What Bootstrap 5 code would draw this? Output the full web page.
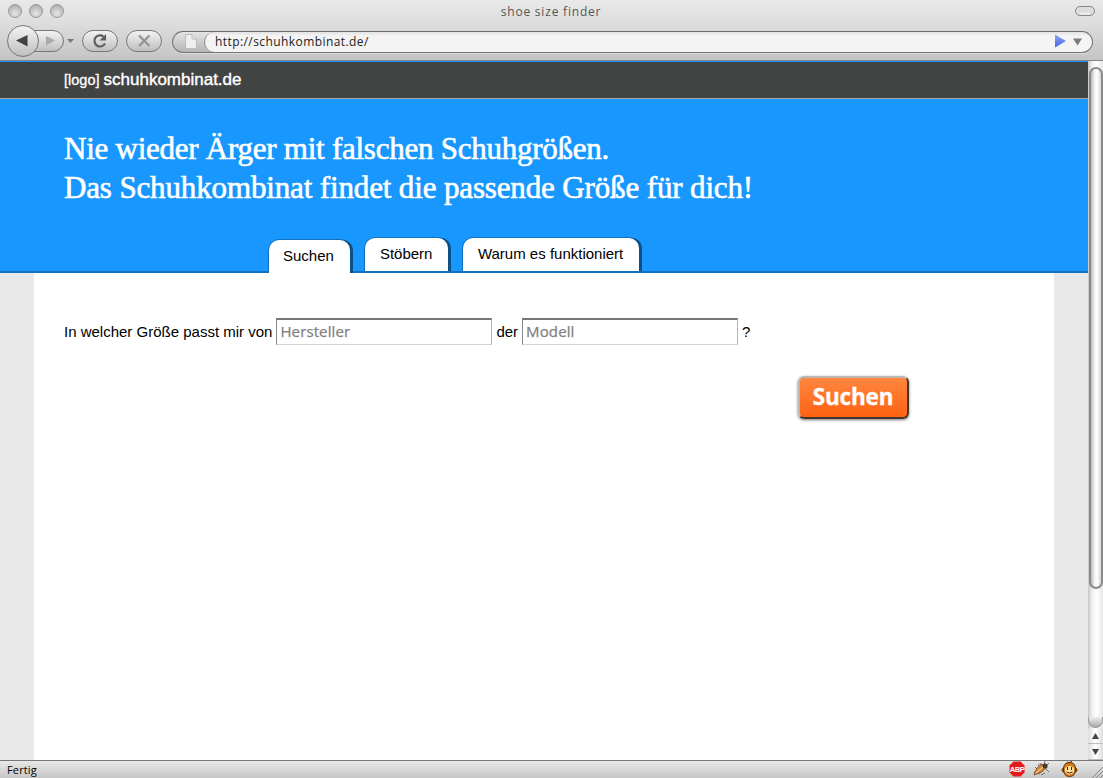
<!DOCTYPE html>
<html lang="de">
<head>
<meta charset="utf-8">
<title>shoe size finder</title>
<meta name="viewport" content="width=device-width, initial-scale=1">
<link href="https://cdn.jsdelivr.net/npm/bootstrap@5.3.0/dist/css/bootstrap.min.css" rel="stylesheet">
<style>
body{font-family:"Liberation Sans",Arial,sans-serif;font-size:15px;line-height:18px;color:#000;background:#fff}
.lucida{font-family:"Open Sans","Noto Sans",sans-serif}
.window{height:778px}
.chrome{height:61px;background:linear-gradient(#e9e9e9 0,#dedede 22px,#c5c5c5 59px);border-bottom:1px solid #858585}
.titlebar{height:24px;padding:3px 8px 0 7px}
.titlebar .caption{font-size:12px;line-height:17px;letter-spacing:.8px;color:#555;padding-right:40px}
.toolbar{height:36px;padding:0 10px 0 7px}
.urlbar{height:22px;margin-left:10px;border:1px solid #777;border-top-color:#6b6b6b;border-radius:11px;background:linear-gradient(#e4e4e4,#b5b5b5);overflow:hidden;box-shadow:0 1px 0 #dcdcdc}
.urlbox{background:linear-gradient(#e2e2e2,#f4f4f4 4px);border-radius:11px;font-size:12px;letter-spacing:.42px;color:#222;border-left:1px solid #888;padding-left:10px;padding-right:10px}
.page-view{height:699px}
.site-bar{height:38px;background:#424443;border-top:1px solid #1897fe;border-bottom:1px solid #a5a7a8;padding-left:64px;color:#fff;font-size:14.5px;line-height:35px}
.site-bar b{font-size:17px;font-weight:400;-webkit-text-stroke:.4px #fff}
.site-bar span{-webkit-text-stroke:.3px #fff}
.hero{height:174px;background:#1897fe;border-bottom:2px solid #1270bd;padding-left:64px}
.hero h1{font-family:"Liberation Serif",serif;font-size:31px;line-height:39px;font-weight:400;color:#fff;margin:0;padding-top:30px;-webkit-text-stroke:.6px #fff}
.h-one{letter-spacing:-.25px}
.h-two{letter-spacing:-.14px}
.tabs{margin-left:205px;gap:15px;height:33px}
.tab{background:#fff;color:#000;border:0;border-radius:10px 10px 0 0;height:33px;padding:7px 15.5px 0 15px;box-shadow:2px 0 0 #0d5085,3px 0 0 #0d5085,0 -1px 0 #1270bd,-1px 0 0 #1270bd;text-decoration:none;white-space:nowrap}
.tab.active{padding:7px 16px 0 14px;margin-top:2px;position:relative}
.paper{margin:0 34px;background:#fff;padding:45px 145px 0 30px}
.fieldbox{width:216px;height:27px;border:1px solid #b5b5b5;border-top:2px solid #777;border-left-color:#888;border-bottom-color:#d5d5d5;border-radius:0;padding:0 3px 2px;font-size:15px;font-family:"Open Sans",sans-serif;letter-spacing:.12px;background:#fff}
.fieldbox::placeholder{color:#808080;opacity:1;-webkit-text-stroke:.25px #808080}
.go{width:111px;height:43px;border:2px solid;border-color:#bdb7b3 #43372f #43372f #bdb7b3;border-radius:6px;background:linear-gradient(#ff8842,#ff6010) border-box;color:#fff;font:700 22.5px/34px "Open Sans",sans-serif;letter-spacing:-.15px;padding:0 1px 1px 0;-webkit-text-stroke:.3px #fff;box-shadow:0 1px 3px rgba(0,0,0,.55)}
.scroll{width:15px;background:linear-gradient(90deg,#c6c6c6,#f0f0f0 4px,#fff 9px,#e6e6e6)}
.thumb{height:522px;margin:6px 0 0 1px;width:14px;border:2px solid #8a8a8a;border-radius:8px;background:linear-gradient(90deg,#bbb,#f8f8f8 4px,#fff 6px,#d6d6d6)}
.track-end{height:11px;border-radius:0 0 8px 8px;background:linear-gradient(#eee,#aaa);border:1px solid #999;border-top:0}
.arrow{height:16px;border-bottom:1px solid #bbb;background:linear-gradient(90deg,#ddd,#fff,#ddd)}
.status{height:18px;border-top:1px solid #777;background:linear-gradient(#e8e8e8,#c6c6c6);padding-left:7px;font-size:11px;line-height:17px;letter-spacing:.15px}
</style>
</head>
<body class="overflow-hidden">
<div class="window d-flex flex-column">
  <header class="chrome lucida flex-shrink-0">
    <div class="titlebar d-flex align-items-start">
      <svg width="60" height="17"><defs><radialGradient id="r" cx=".5" cy=".7" r=".65"><stop offset="0" stop-color="#e6e6e6"/><stop offset="1" stop-color="#b0b0b0"/></radialGradient></defs><g fill="url(#r)" stroke="#999"><circle cx="8" cy="8" r="6.5"/><circle cx="29" cy="8" r="6.5"/><circle cx="50" cy="8" r="6.5"/></g></svg>
      <div class="caption flex-fill text-center">shoe size finder</div>
      <svg width="20" height="17"><rect x=".5" y="3.5" width="19" height="9" rx="4.5" fill="#dcdcdc" stroke="#888"/><path d="M5 10.5h10" stroke="#f0f0f0" stroke-width="1.500"/></svg>
    </div>
    <div class="toolbar d-flex align-items-center">
      <svg width="155" height="36" class="flex-shrink-0"><defs><linearGradient id="g" x2="0" y2="1"><stop stop-color="#f4f4f4"/><stop offset="1" stop-color="#bebebe"/></linearGradient></defs>
        <g fill="url(#g)" stroke="#777"><path d="M20 6.5H46A10.5 10.5 0 0 1 46 27.5H20Z"/><circle cx="16" cy="17" r="15.5"/><rect x="75.500" y="6.500" width="35" height="21" rx="10.500"/><rect x="119.500" y="6.500" width="35" height="21" rx="10.500"/></g>
        <path d="M9 16.500 20.500 11V22.500Z" fill="#424242"/><path d="M48 16.500 39 12V21.500Z" fill="#aaa"/><path d="M60 15h7l-3.500 4Z" fill="#777"/>
        <path d="M96.500 12.500A5.600 5.600 0 1 0 98 19.500" fill="none" stroke="#5d5d5d" stroke-width="2.200"/><path d="M99 10V16.500H92.500Z" fill="#5d5d5d"/>
        <path d="M132 11.500 142.500 22M142.500 11.500 132 22" stroke="#929292" stroke-width="2.200"/></svg>
      <div class="urlbar d-flex flex-fill">
        <svg width="31" height="20" class="flex-shrink-0"><path d="M12.500 2.500H19L23.500 7V16.500H12.500Z" fill="#eee" stroke="#bbb"/><path d="M19 2.500V7h4.500" fill="none" stroke="#bbb"/></svg>
        <div class="urlbox flex-fill d-flex align-items-center justify-content-between"><span>http://schuhkombinat.de/</span><svg width="28" height="18"><defs><linearGradient id="b" x2="0" y2="1"><stop stop-color="#91a8ed"/><stop offset="1" stop-color="#4560e8"/></linearGradient></defs><path d="M1 1.500 12 8 1 14.500Z" fill="url(#b)"/><path d="M19 5.500h9l-4.500 7Z" fill="#7c7c7c"/></svg></div>
      </div>
    </div>
  </header>

  <div class="page-view d-flex flex-shrink-0">
    <main class="flex-fill d-flex flex-column" style="background:#e9e9e9">
      <div class="site-bar flex-shrink-0"><span>[logo]</span> <b>schuhkombinat.de</b></div>
      <section class="hero flex-shrink-0 d-flex flex-column justify-content-between">
        <h1><span class="h-one">Nie wieder Ärger mit falschen Schuhgrößen.</span><br><span class="h-two">Das Schuhkombinat findet die passende Größe für dich!</span></h1>
        <nav class="tabs d-flex"><a class="tab active" href="#">Suchen</a><a class="tab" href="#">Stöbern</a><a class="tab" href="#">Warum es funktioniert</a></nav>
      </section>
      <form class="paper flex-fill">
        <div class="d-flex align-items-center gap-1"><label for="maker">In welcher Größe passt mir von</label><input id="maker" class="fieldbox" placeholder="Hersteller"><label for="model">der</label><input id="model" class="fieldbox" placeholder="Modell"><span>?</span></div>
        <div class="d-flex justify-content-end" style="padding-top:31px"><button type="button" class="go">Suchen</button></div>
      </form>
    </main>
    <aside class="scroll flex-shrink-0 d-flex flex-column">
      <div class="thumb flex-shrink-0"></div>
      <div class="flex-fill"></div>
      <div class="track-end flex-shrink-0"></div>
      <svg class="arrow flex-shrink-0" width="15" height="16"><path d="M4 11h7L7.500 5Z" fill="#444"/></svg>
      <svg class="arrow flex-shrink-0" width="15" height="16"><path d="M4 5h7l-3.500 6Z" fill="#444"/></svg>
    </aside>
  </div>

  <footer class="status lucida d-flex justify-content-between flex-shrink-0"><span>Fertig</span>
    <svg width="95" height="17"><path d="M5.500 .5h7l4 4v7l-4 4h-7l-4-4v-7Z" fill="#e21a1a"/><text x="9" y="10.800" font-family="Liberation Sans" font-weight="700" font-size="7.500" letter-spacing="-.5" text-anchor="middle" fill="#fff">ABP</text>
      <g stroke="#555" stroke-width=".8" fill="none"><path d="M27 6l6 6M30 3l5 8M26 11l6 2M33 14l4-2M36 4l1-4M38 5l3-3M38 8l3 3M33 6l-1-4"/></g><path d="M26 14Q28 6 34 3L38 7Q34 12 26 14Z" fill="#d98937" stroke="#7b4a24" stroke-width=".8"/><circle cx="37" cy="5" r="2.600" fill="#493a30"/><path d="M28 12l7-6" stroke="#ffe0a0"/>
      <g fill="#d77a22" stroke="#613000"><circle cx="56" cy="9" r="2"/><circle cx="67" cy="9" r="2"/><path d="M61.500 1.500Q67.500 1.500 67.500 8Q67.500 15.500 61.500 15.500T55.500 8Q55.500 1.500 61.500 1.500Z"/></g><path d="M57 7q4.500-4 9 0v4q-4.500 5-9 0Z" fill="#ffe198"/><path d="M59.500 6v3M63.500 6v3M58.500 11q3 2 6 0" stroke="#402000" fill="none"/><path d="M59 1l2 1 3-2" stroke="#613000" fill="none"/>
      <path d="M84 17 95 6M88 17l7-7M92 17l3-3" stroke="#888"/></svg>
  </footer>
</div>
<script src="https://cdn.jsdelivr.net/npm/bootstrap@5.3.0/dist/js/bootstrap.bundle.min.js"></script>
</body>
</html>
